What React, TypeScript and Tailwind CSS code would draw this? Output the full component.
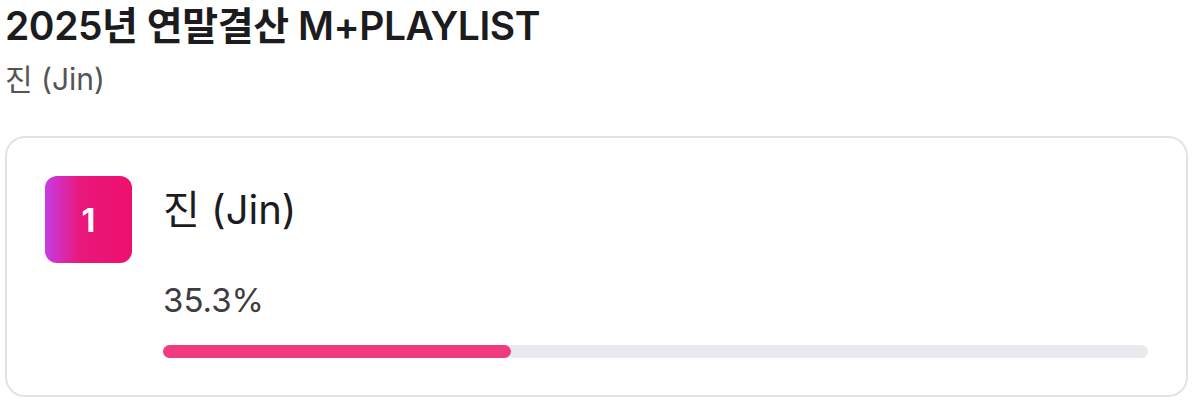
export default function App() {
  const percent = 35.3

  return (
    <div className="min-h-screen bg-white pl-[5px] pr-[12px] pt-[2px] text-[#1c1c1e] [font-family:Inter,'Noto_Sans_CJK_KR',sans-serif]">
      <h1 className="text-[39px] font-semibold leading-[48px] tracking-[-0.45px]">2025년 연말결산 M+PLAYLIST</h1>
      <p className="mt-[11px] text-[30px] leading-[36px] text-[#555]">진 (Jin)</p>

      {/* Ranking card */}
      <div className="mt-[39px] rounded-[20px] border-2 border-[#e3e3e6] px-[38px] pt-[38px] pb-[37px]">
        <div className="flex gap-[31px]">
          <div className="flex h-[87px] w-[87px] shrink-0 items-center justify-center rounded-[12px] bg-[linear-gradient(to_right,#c63ce6_0%,#e8187c_40%,#ee0f6c_100%)] pt-[2px] text-[32px] font-bold text-white">
            1
          </div>
          <div className="flex-1">
            <div className="mt-[10px] text-[40px] leading-[48px] text-[#1c1c1e]">진 (Jin)</div>
            <div className="mt-[48px] text-[33px] leading-[36px] text-[#3c3c43]">{percent}%</div>
            <div className="mt-[27px] h-[13px] w-full rounded-full bg-[#e9e9ee]">
              <div className="h-full rounded-full bg-[#f23b7e]" style={{ width: `${percent}%` }} />
            </div>
          </div>
        </div>
      </div>
    </div>
  )
}
